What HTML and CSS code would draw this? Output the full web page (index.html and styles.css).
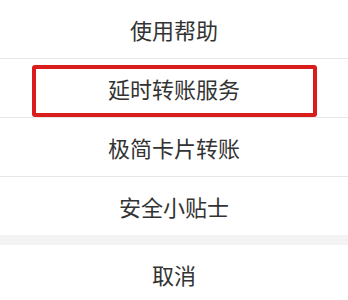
FILE: index.html
```html
<!DOCTYPE html>
<html>
<head>
	<meta charset="utf-8">
	<title>菜单</title>
	<link rel="stylesheet" href="styles.css">
</head>
<body>
	<div class="sheet">
		<div class="item">使用帮助</div>
		<div class="item marked">
			延时转账服务
			<span class="highlight"></span>
		</div>
		<div class="item">极简卡片转账</div>
		<div class="item last">安全小贴士</div>
		<div class="gap"></div>
		<div class="item cancel">取消</div>
	</div>
</body>
</html>
```

FILE: styles.css
```css
body {
	margin: 0;
	background-color: #fff;
	font-family: "Noto Sans CJK SC", "Noto Sans", sans-serif;
}
.sheet {
	width: 348px;
}
.item {
	position: relative;
	height: 58px;
	display: flex;
	align-items: center;
	justify-content: center;
	border-bottom: 1px solid #e6e6e6;
	font-size: 22px;
	color: #333;
}
.item.last,
.item.cancel {
	border-bottom: none;
}
.gap {
	height: 10px;
	background-color: #f3f3f3;
}
.highlight {
	position: absolute;
	left: 32px;
	right: 31px;
	top: 6px;
	bottom: 0;
	border: 4px solid #d91c1c;
	border-radius: 3px;
}
```
